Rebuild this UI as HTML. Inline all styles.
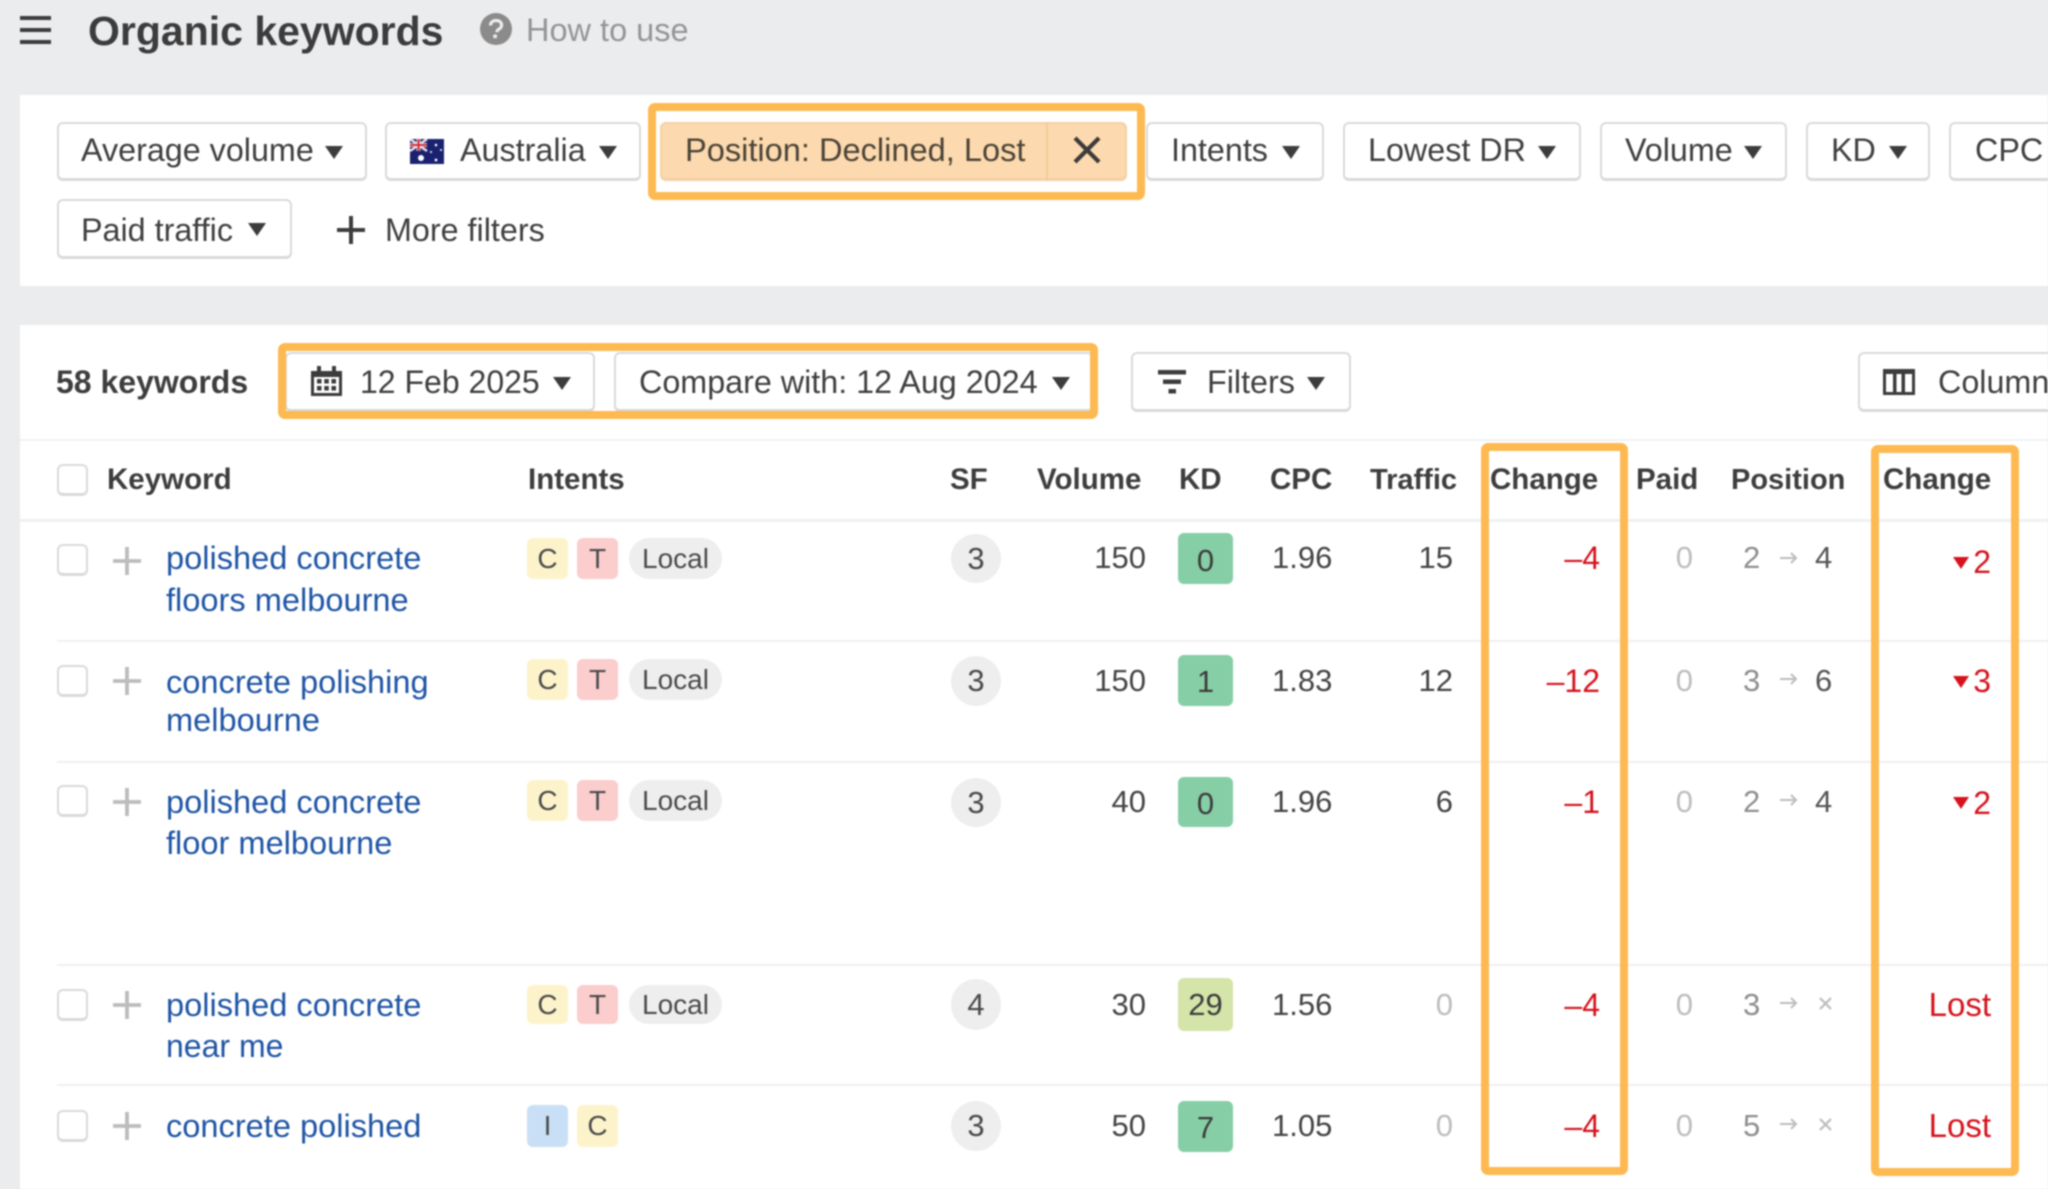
<!DOCTYPE html>
<html lang="en">
<head>
<meta charset="utf-8">
<title>Organic keywords</title>
<style>
html,body{margin:0;padding:0;width:2048px;height:1189px;overflow:hidden;background:#ebecee}
#w{position:absolute;left:0;top:0;width:2048px;height:1189px;overflow:hidden;background:#ebecee;filter:blur(.7px);font-family:"Liberation Sans",Arial,sans-serif;color:#3f3f3f}
#w div,#w span,#w svg,#w a{position:absolute;white-space:nowrap}
.p{background:#fff;left:20px;width:2028px}
.b{box-sizing:border-box;background:#fff;border:2px solid #dadada;border-bottom-width:3px;border-radius:6px}
.t{font-size:32.3px;line-height:40px;height:40px}
.c{width:0;height:0;border-left:9px solid transparent;border-right:9px solid transparent;border-top:13px solid #3c3c3c;margin-left:-1px}
.h{font-weight:bold;font-size:29.5px;line-height:40px;height:40px;top:460px;color:#3d3d3d}
.l{color:#1f55a5;font-size:32.6px;line-height:40px;height:40px;left:166px}
.d{background:#eff0f1;height:2px;left:57px;width:1991px}
.k{box-sizing:border-box;left:57px;width:31px;height:32px;background:#fff;border:2px solid #dadada;border-bottom-width:3px;border-radius:6px}
.ph{left:113px;width:28px;height:28px}
.g{border-radius:6px;text-align:center;font-size:28px;color:#4a4a4a}
.cc{background:#fdf3cb}.tt{background:#fbcdcd}.ii{background:#c9dff5}
.lo{background:#eee;border-radius:22px;left:629px;width:93px}
.sf{left:951px;width:50px;background:#eee;border-radius:50%;text-align:center;font-size:31px;color:#4a4a4a}
.kd{left:1178px;width:55px;border-radius:6px;text-align:center;font-size:31px;color:#3c3c3c}
.n{font-size:31px;line-height:40px;height:40px;color:#444;text-align:right;width:120px}
.vol{left:1026px}.cpc{left:1272px;text-align:left}.tr{left:1333px}.ch{left:1480px;color:#d6121c;font-size:32px}.pd{left:1573px;color:#bdbdbd}
.pos{left:1743px;text-align:left;color:#8e8e8e;width:30px}.pos2{left:1815px;text-align:left;color:#555;width:30px}
.lost{left:1871px;color:#d6121c;font-size:32px}
.ar{left:1780px;width:18px;height:12px}.x{left:1819px;width:13px;height:13px}
.tr3{left:1953px;width:0;height:0;border-left:8px solid transparent;border-right:8px solid transparent;border-top:12px solid #d6121c}
.o{box-sizing:border-box;border:8px solid #fdb952;border-radius:7px}
</style>
</head>
<body>
<div id="w">
<!-- header -->
<svg style="left:20px;top:16px" width="31" height="28" viewBox="0 0 31 28"><rect y="0" width="31" height="4" fill="#3c3c3c"/><rect y="12" width="31" height="4" fill="#3c3c3c"/><rect y="24" width="31" height="4" fill="#3c3c3c"/></svg>
<div style="left:88px;top:8px;font-size:41px;line-height:46px;font-weight:bold;color:#3c3c3c">Organic keywords</div>
<svg style="left:480px;top:13px" width="32" height="32" viewBox="0 0 32 32"><circle cx="16" cy="16" r="16" fill="#8b8b8b"/><path d="M10.5 12.500c0-3.200 2.500-5 5.600-5 3.200 0 5.500 1.800 5.500 4.600 0 2-1.100 3.100-2.700 4.100-1.500.9-2 1.500-2 3" fill="none" stroke="#ebecee" stroke-width="3.200"/><rect x="13.300" y="21.500" width="3.600" height="3.600" fill="#ebecee"/></svg>
<div style="left:526px;top:10px;font-size:32.5px;line-height:40px;color:#959595">How to use</div>

<!-- filter panel -->
<div class="p" style="top:95px;height:191px"></div>
<div class="b" style="left:57px;top:122px;width:310px;height:59px"></div>
<div class="t" style="left:81px;top:130px">Average volume</div><div class="c" style="left:326px;top:146px"></div>
<div class="b" style="left:385px;top:122px;width:256px;height:59px"></div>
<svg style="left:410px;top:139px" width="34" height="25" viewBox="0 0 34 25"><rect width="34" height="25" fill="#1a2170"/><rect width="17" height="12" fill="#2a2f7d"/><path d="M0 0L17 12M17 0L0 12" stroke="#f0dcdc" stroke-width="2.400"/><path d="M8.500 0V12M0 6H17" stroke="#f3f3f3" stroke-width="3.600"/><path d="M8.500 0V12M0 6H17" stroke="#d52b3b" stroke-width="2"/><circle cx="11" cy="19" r="3" fill="#fff"/><circle cx="26" cy="6" r="1.300" fill="#fff"/><circle cx="31" cy="11" r="1" fill="#fff"/><circle cx="21" cy="13" r="1" fill="#fff"/><circle cx="26" cy="21" r="1.400" fill="#fff"/></svg>
<div class="t" style="left:460px;top:130px">Australia</div><div class="c" style="left:600px;top:146px"></div>
<div class="b" style="left:660px;top:122px;width:467px;height:59px;background:#fcd9ae;border-color:#f5d0a3"></div>
<div style="left:1046px;top:122px;width:2px;height:59px;background:#f3cb9c"></div>
<div class="t" style="left:685px;top:130px;color:#4b4438;font-size:32.6px">Position: Declined, Lost</div>
<svg style="left:1072px;top:136px" width="30" height="28" viewBox="0 0 30 28"><path d="M3 2L27 26M27 2L3 26" stroke="#3c3c3c" stroke-width="4.200" fill="none"/></svg>
<div class="b" style="left:1146px;top:122px;width:178px;height:59px"></div>
<div class="t" style="left:1171px;top:130px">Intents</div><div class="c" style="left:1283px;top:146px"></div>
<div class="b" style="left:1343px;top:122px;width:238px;height:59px"></div>
<div class="t" style="left:1368px;top:130px">Lowest DR</div><div class="c" style="left:1539px;top:146px"></div>
<div class="b" style="left:1600px;top:122px;width:187px;height:59px"></div>
<div class="t" style="left:1625px;top:130px">Volume</div><div class="c" style="left:1745px;top:146px"></div>
<div class="b" style="left:1806px;top:122px;width:124px;height:59px"></div>
<div class="t" style="left:1831px;top:130px">KD</div><div class="c" style="left:1890px;top:146px"></div>
<div class="b" style="left:1949px;top:122px;width:140px;height:59px"></div>
<div class="t" style="left:1975px;top:130px">CPC</div>
<div class="b" style="left:57px;top:199px;width:235px;height:60px"></div>
<div class="t" style="left:81px;top:210px">Paid traffic</div><div class="c" style="left:249px;top:223px"></div>
<svg style="left:337px;top:216px" width="28" height="28" viewBox="0 0 28 28"><path d="M14 0V28M0 14H28" stroke="#3c3c3c" stroke-width="4"/></svg>
<div class="t" style="left:385px;top:210px">More filters</div>
<div class="o" style="left:648px;top:103px;width:497px;height:97px"></div>

<!-- table panel -->
<div class="p" style="top:325px;height:864px"></div>
<div style="left:56px;top:362px;font-size:32px;line-height:40px;font-weight:bold;color:#3d3d3d">58 keywords</div>
<div class="b" style="left:285px;top:352px;width:310px;height:60px"></div>
<svg style="left:311px;top:366px" width="31" height="30" viewBox="0 0 31 30"><path d="M0 5H31V30H0Z" fill="#3c3c3c"/><rect x="6" y="0" width="4" height="7" fill="#3c3c3c"/><rect x="21" y="0" width="4" height="7" fill="#3c3c3c"/><rect x="3" y="11" width="25" height="16" fill="#fff"/><g fill="#3c3c3c"><rect x="6" y="13" width="4.500" height="4.500"/><rect x="13.300" y="13" width="4.500" height="4.500"/><rect x="20.500" y="13" width="4.500" height="4.500"/><rect x="6" y="20" width="4.500" height="4.500"/><rect x="13.300" y="20" width="4.500" height="4.500"/><rect x="20.500" y="20" width="4.500" height="4.500"/></g></svg>
<div class="t" style="left:360px;top:362px;font-size:32px">12 Feb 2025</div><div class="c" style="left:554px;top:377px"></div>
<div class="b" style="left:614px;top:352px;width:480px;height:60px"></div>
<div class="t" style="left:639px;top:362px;font-size:32.3px">Compare with: 12 Aug 2024</div><div class="c" style="left:1053px;top:377px"></div>
<div class="b" style="left:1131px;top:352px;width:220px;height:60px"></div>
<svg style="left:1158px;top:370px" width="28" height="24" viewBox="0 0 28 24"><rect width="28" height="4.500" fill="#3c3c3c"/><rect x="5" y="9.500" width="18" height="4.500" fill="#3c3c3c"/><rect x="10.500" y="19" width="7.500" height="4.500" fill="#3c3c3c"/></svg>
<div class="t" style="left:1207px;top:362px">Filters</div><div class="c" style="left:1308px;top:377px"></div>
<div class="b" style="left:1858px;top:352px;width:240px;height:60px"></div>
<svg style="left:1883px;top:369px" width="32" height="26" viewBox="0 0 32 26"><rect x="1.500" y="1.500" width="29" height="23" fill="none" stroke="#3c3c3c" stroke-width="3"/><rect x="0" y="0" width="32" height="5" fill="#3c3c3c"/><rect x="10" y="2" width="3.500" height="22" fill="#3c3c3c"/><rect x="18.500" y="2" width="3.500" height="22" fill="#3c3c3c"/></svg>
<div class="t" style="left:1938px;top:362px">Columns</div>
<div style="left:20px;top:439px;width:2028px;height:2px;background:#f0f1f2"></div>

<!-- table head -->
<div class="k" style="top:464px"></div>
<div class="h" style="left:107px">Keyword</div>
<div class="h" style="left:528px">Intents</div>
<div class="h" style="left:950px">SF</div>
<div class="h" style="left:1037px">Volume</div>
<div class="h" style="left:1179px">KD</div>
<div class="h" style="left:1270px">CPC</div>
<div class="h" style="left:1370px;font-size:29px">Traffic</div>
<div class="h" style="left:1490px">Change</div>
<div class="h" style="left:1636px">Paid</div>
<div class="h" style="left:1731px;font-size:29px">Position</div>
<div class="h" style="left:1883px">Change</div>
<div style="left:20px;top:519px;width:2028px;height:3px;background:#f0f1f2"></div>

<!-- row 1 -->
<div class="k" style="top:544px"></div>
<svg class="ph" style="top:547px" viewBox="0 0 28 28"><path d="M14 0V28M0 14H28" stroke="#bcbcbc" stroke-width="3.800"/></svg>
<a class="l" style="top:538px">polished concrete</a><a class="l" style="top:580px">floors melbourne</a>
<div class="g cc" style="left:527px;top:538px;width:41px;height:41px;line-height:42px">C</div>
<div class="g tt" style="left:577px;top:538px;width:41px;height:41px;line-height:42px">T</div>
<div class="g lo" style="top:538px;height:41px;line-height:42px">Local</div>
<div class="sf" style="top:534px;height:49px;line-height:49px">3</div>
<div class="n vol" style="top:538px">150</div>
<div class="kd" style="top:533px;height:51px;line-height:55px;background:#86cea6">0</div>
<div class="n cpc" style="top:538px">1.96</div>
<div class="n tr" style="top:538px">15</div>
<div class="n ch" style="top:538px">–4</div>
<div class="n pd" style="top:538px">0</div>
<div class="n pos" style="top:538px">2</div>
<svg class="ar" style="top:552px" viewBox="0 0 18 12"><path d="M0 6H16M11 1L16 6L11 11" fill="none" stroke="#bdbdbd" stroke-width="2"/></svg>
<div class="n pos2" style="top:538px">4</div>
<div class="tr3" style="top:557px"></div>
<div class="n lost" style="top:542px">2</div>
<div class="d" style="top:640px"></div>

<!-- row 2 -->
<div class="k" style="top:665px"></div>
<svg class="ph" style="top:667px" viewBox="0 0 28 28"><path d="M14 0V28M0 14H28" stroke="#bcbcbc" stroke-width="3.800"/></svg>
<a class="l" style="top:662px">concrete polishing</a><a class="l" style="top:700px">melbourne</a>
<div class="g cc" style="left:527px;top:659px;width:41px;height:41px;line-height:41px">C</div>
<div class="g tt" style="left:577px;top:659px;width:41px;height:41px;line-height:41px">T</div>
<div class="g lo" style="top:659px;height:41px;line-height:41px">Local</div>
<div class="sf" style="top:656px;height:50px;line-height:50px">3</div>
<div class="n vol" style="top:661px">150</div>
<div class="kd" style="top:655px;height:51px;line-height:54px;background:#86cea6">1</div>
<div class="n cpc" style="top:661px">1.83</div>
<div class="n tr" style="top:661px">12</div>
<div class="n ch" style="top:661px">–12</div>
<div class="n pd" style="top:661px">0</div>
<div class="n pos" style="top:661px">3</div>
<svg class="ar" style="top:673px" viewBox="0 0 18 12"><path d="M0 6H16M11 1L16 6L11 11" fill="none" stroke="#bdbdbd" stroke-width="2"/></svg>
<div class="n pos2" style="top:661px">6</div>
<div class="tr3" style="top:676px"></div>
<div class="n lost" style="top:661px">3</div>
<div class="d" style="top:761px"></div>

<!-- row 3 -->
<div class="k" style="top:785px"></div>
<svg class="ph" style="top:788px" viewBox="0 0 28 28"><path d="M14 0V28M0 14H28" stroke="#bcbcbc" stroke-width="3.800"/></svg>
<a class="l" style="top:782px">polished concrete</a><a class="l" style="top:823px">floor melbourne</a>
<div class="g cc" style="left:527px;top:780px;width:41px;height:41px;line-height:41px">C</div>
<div class="g tt" style="left:577px;top:780px;width:41px;height:41px;line-height:41px">T</div>
<div class="g lo" style="top:780px;height:41px;line-height:41px">Local</div>
<div class="sf" style="top:778px;height:49px;line-height:49px">3</div>
<div class="n vol" style="top:782px">40</div>
<div class="kd" style="top:777px;height:50px;line-height:54px;background:#86cea6">0</div>
<div class="n cpc" style="top:782px">1.96</div>
<div class="n tr" style="top:782px">6</div>
<div class="n ch" style="top:782px">–1</div>
<div class="n pd" style="top:782px">0</div>
<div class="n pos" style="top:782px">2</div>
<svg class="ar" style="top:794px" viewBox="0 0 18 12"><path d="M0 6H16M11 1L16 6L11 11" fill="none" stroke="#bdbdbd" stroke-width="2"/></svg>
<div class="n pos2" style="top:782px">4</div>
<div class="tr3" style="top:797px"></div>
<div class="n lost" style="top:783px">2</div>
<div class="d" style="top:964px"></div>

<!-- row 4 -->
<div class="k" style="top:989px"></div>
<svg class="ph" style="top:991px" viewBox="0 0 28 28"><path d="M14 0V28M0 14H28" stroke="#bcbcbc" stroke-width="3.800"/></svg>
<a class="l" style="top:985px">polished concrete</a><a class="l" style="top:1026px;font-size:32px">near me</a>
<div class="g cc" style="left:527px;top:985px;width:41px;height:39px;line-height:39px">C</div>
<div class="g tt" style="left:577px;top:985px;width:41px;height:39px;line-height:39px">T</div>
<div class="g lo" style="top:985px;height:39px;line-height:39px">Local</div>
<div class="sf" style="top:979px;height:51px;line-height:51px">4</div>
<div class="n vol" style="top:985px">30</div>
<div class="kd" style="top:978px;height:53px;line-height:53px;background:#d5e4a9">29</div>
<div class="n cpc" style="top:985px">1.56</div>
<div class="n tr" style="top:985px;color:#bdbdbd">0</div>
<div class="n ch" style="top:985px">–4</div>
<div class="n pd" style="top:985px">0</div>
<div class="n pos" style="top:985px">3</div>
<svg class="ar" style="top:997px" viewBox="0 0 18 12"><path d="M0 6H16M11 1L16 6L11 11" fill="none" stroke="#bdbdbd" stroke-width="2"/></svg>
<svg class="x" style="top:997px" viewBox="0 0 13 13"><path d="M1 1L12 12M12 1L1 12" stroke="#bdbdbd" stroke-width="2.200"/></svg>
<div class="n lost" style="top:985px;font-size:33px">Lost</div>
<div class="d" style="top:1084px"></div>

<!-- row 5 -->
<div class="k" style="top:1110px"></div>
<svg class="ph" style="top:1112px" viewBox="0 0 28 28"><path d="M14 0V28M0 14H28" stroke="#bcbcbc" stroke-width="3.800"/></svg>
<a class="l" style="top:1106px">concrete polished</a>
<div class="g ii" style="left:527px;top:1105px;width:41px;height:42px;line-height:42px">I</div>
<div class="g cc" style="left:577px;top:1105px;width:41px;height:42px;line-height:42px">C</div>
<div class="sf" style="top:1101px;height:50px;line-height:50px">3</div>
<div class="n vol" style="top:1106px">50</div>
<div class="kd" style="top:1101px;height:51px;line-height:53px;background:#86cea6">7</div>
<div class="n cpc" style="top:1106px">1.05</div>
<div class="n tr" style="top:1106px;color:#bdbdbd">0</div>
<div class="n ch" style="top:1106px">–4</div>
<div class="n pd" style="top:1106px">0</div>
<div class="n pos" style="top:1106px">5</div>
<svg class="ar" style="top:1118px" viewBox="0 0 18 12"><path d="M0 6H16M11 1L16 6L11 11" fill="none" stroke="#bdbdbd" stroke-width="2"/></svg>
<svg class="x" style="top:1118px" viewBox="0 0 13 13"><path d="M1 1L12 12M12 1L1 12" stroke="#bdbdbd" stroke-width="2.200"/></svg>
<div class="n lost" style="top:1106px;font-size:33px">Lost</div>

<!-- highlight frames -->
<div class="o" style="left:278px;top:343px;width:820px;height:76px"></div>
<div class="o" style="left:1481px;top:443px;width:147px;height:732px"></div>
<div class="o" style="left:1871px;top:445px;width:148px;height:731px"></div>
</div>
</body>
</html>
